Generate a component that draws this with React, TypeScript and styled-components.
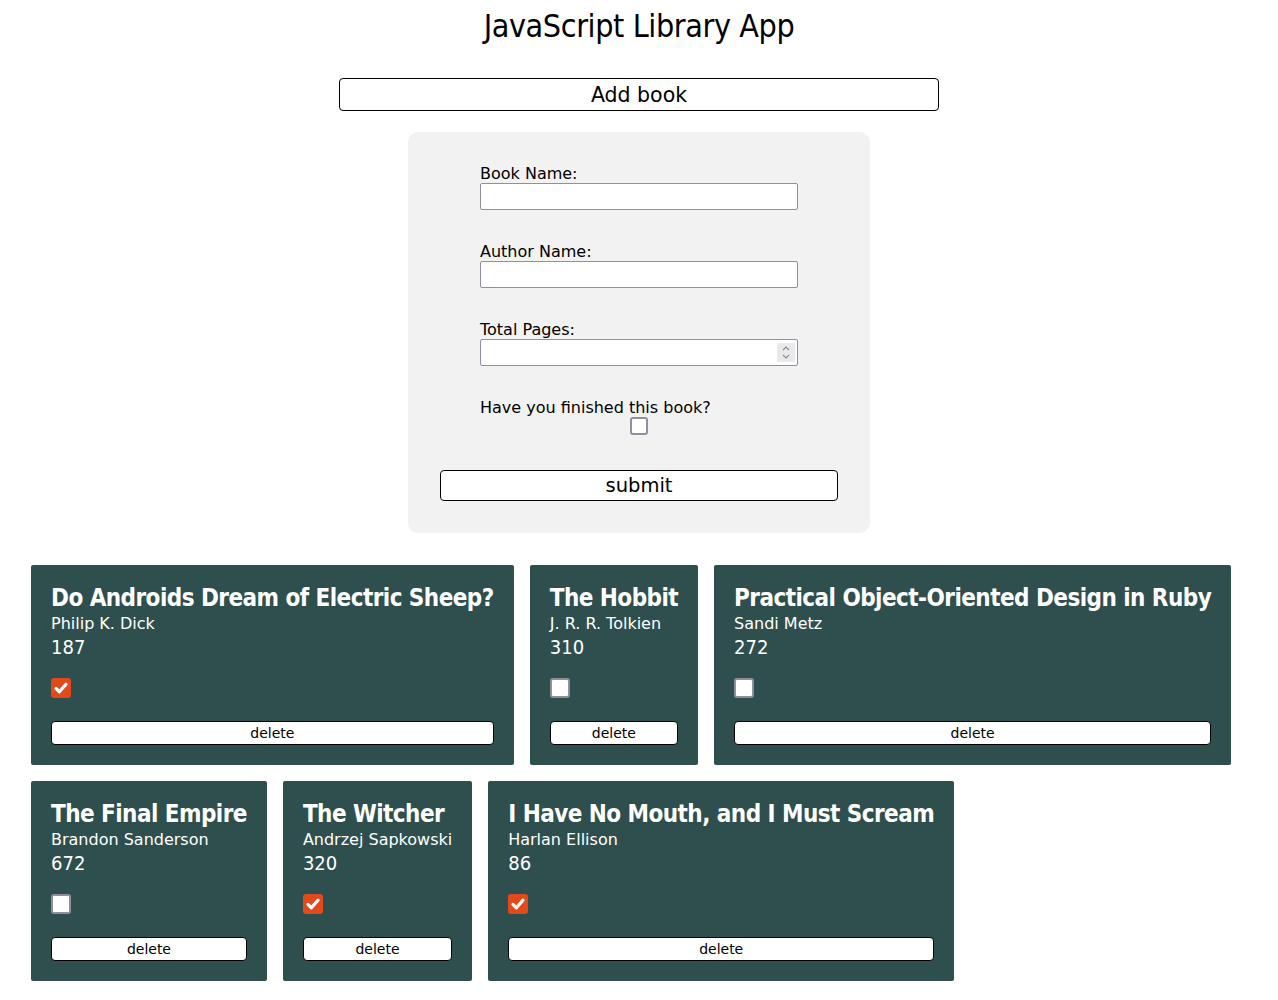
import React, { useState } from "react";
import styled, { createGlobalStyle } from "styled-components";

const GlobalStyle = createGlobalStyle`
  body {
    margin: 8px;
    font-family: "DejaVu Sans", sans-serif;
    background: #ffffff;
    color: #000000;
  }
`;

const Page = styled.div`
  display: flex;
  flex-direction: column;
  align-items: center;
`;

const Title = styled.h1`
  margin: 0;
  font-family: "DejaVu Sans Condensed", "DejaVu Sans", sans-serif;
  font-weight: normal;
  font-size: 32px;
  line-height: 37px;
  letter-spacing: -0.4px;
`;

const AddButton = styled.button`
  margin-top: 33px;
  width: 600px;
  height: 33px;
  background: #ffffff;
  border: 1px solid #000000;
  border-radius: 4px;
  font-family: "DejaVu Sans", sans-serif;
  font-size: 20.5px;
  color: #000000;
  padding: 0;
`;

const Form = styled.form`
  margin-top: 21px;
  width: 462px;
  box-sizing: border-box;
  background: #f2f2f2;
  border-radius: 10px;
  padding: 32px 0;
  display: flex;
  flex-direction: column;
  align-items: center;
  gap: 32px;
`;

const Field = styled.div<{ $center?: boolean }>`
  width: 318px;
  display: flex;
  flex-direction: column;
  align-items: ${(p) => (p.$center ? "center" : "stretch")};
`;

const Label = styled.label`
  font-size: 16px;
  line-height: 19px;
  align-self: flex-start;
`;

const InputWrap = styled.div`
  position: relative;
  display: flex;
`;

const TextInput = styled.input`
  width: 318px;
  height: 27px;
  box-sizing: border-box;
  border: 1px solid #8f8f9d;
  border-radius: 2px;
  background: #ffffff;
  padding: 2px 4px;
  font-family: "DejaVu Sans", sans-serif;
  font-size: 14px;
  -moz-appearance: textfield;
  &::-webkit-outer-spin-button,
  &::-webkit-inner-spin-button {
    -webkit-appearance: none;
    margin: 0;
  }
`;

const Spinner = styled.span`
  position: absolute;
  right: 3px;
  top: 4px;
  width: 18px;
  height: 19px;
  background: #e9e9ed;
  display: flex;
  align-items: center;
  justify-content: center;
`;

const CheckBox = styled.span<{ $checked: boolean; $size: number }>`
  display: inline-flex;
  align-items: center;
  justify-content: center;
  width: ${(p) => p.$size}px;
  height: ${(p) => p.$size}px;
  box-sizing: border-box;
  border-radius: 3px;
  border: ${(p) => (p.$checked ? "none" : "2px solid #8f8f9d")};
  background: ${(p) => (p.$checked ? "#e2491b" : "#ffffff")};
  cursor: pointer;
`;

const HiddenInput = styled.input`
  position: absolute;
  opacity: 0;
  width: 0;
  height: 0;
  margin: 0;
`;

const CheckLabel = styled.label<{ $mt: number }>`
  position: relative;
  display: inline-flex;
  margin-top: ${(p) => p.$mt}px;
`;

const SubmitButton = styled.button`
  margin-top: 3px;
  width: 398px;
  height: 31px;
  background: #ffffff;
  border: 1px solid #000000;
  border-radius: 4px;
  font-family: "DejaVu Sans", sans-serif;
  font-size: 19.5px;
  color: #000000;
  padding: 0;
`;

const Cards = styled.div`
  margin-top: 32px;
  align-self: stretch;
  padding: 0 23px;
  display: flex;
  flex-wrap: wrap;
  gap: 16px;
`;

const Card = styled.div`
  flex: 0 0 auto;
  background: #2f4f4f;
  color: #ffffff;
  border-radius: 2px;
  padding: 20px;
  height: 200px;
  box-sizing: border-box;
  display: flex;
  flex-direction: column;
  align-items: flex-start;
`;

const CardTitle = styled.h2`
  margin: 0;
  font-family: "DejaVu Sans Condensed", "DejaVu Sans", sans-serif;
  font-size: 24px;
  line-height: 26px;
  font-weight: bold;
  letter-spacing: -0.55px;
  white-space: nowrap;
`;

const Author = styled.p`
  margin: 3px 0 0 0;
  font-size: 16px;
  line-height: 19px;
`;

const Pages = styled.p`
  margin: 2px 0 0 0;
  font-family: "DejaVu Sans Condensed", "DejaVu Sans", sans-serif;
  font-size: 20px;
  line-height: 24px;
`;

const DeleteButton = styled.button`
  margin-top: 23px;
  width: 100%;
  height: 24px;
  background: #ffffff;
  border: 1px solid #000000;
  border-radius: 4px;
  font-family: "DejaVu Sans", sans-serif;
  font-size: 14px;
  color: #000000;
  padding: 0;
`;

const Check = ({ checked, size }: { checked: boolean; size: number }) => (
  <CheckBox $checked={checked} $size={size}>
    {checked && (
      <svg width={size * 0.8} height={size * 0.8} viewBox="0 0 14 14">
        <path d="M2.6 7.4 L5.6 10.3 L11.4 3.6" fill="none" stroke="#ffffff" strokeWidth="2.8" strokeLinecap="round" strokeLinejoin="round" />
      </svg>
    )}
  </CheckBox>
);

type Book = { title: string; author: string; pages: number; read: boolean };

const initialBooks: Book[] = [
  { title: "Do Androids Dream of Electric Sheep?", author: "Philip K. Dick", pages: 187, read: true },
  { title: "The Hobbit", author: "J. R. R. Tolkien", pages: 310, read: false },
  { title: "Practical Object-Oriented Design in Ruby", author: "Sandi Metz", pages: 272, read: false },
  { title: "The Final Empire", author: "Brandon Sanderson", pages: 672, read: false },
  { title: "The Witcher", author: "Andrzej Sapkowski", pages: 320, read: true },
  { title: "I Have No Mouth, and I Must Scream", author: "Harlan Ellison", pages: 86, read: true },
];

export default function App() {
  const [books, setBooks] = useState<Book[]>(initialBooks);
  const [finished, setFinished] = useState(false);

  const toggle = (i: number) =>
    setBooks((bs) => bs.map((b, j) => (j === i ? { ...b, read: !b.read } : b)));
  const remove = (i: number) => setBooks((bs) => bs.filter((_, j) => j !== i));

  return (
    <Page>
      <GlobalStyle />
      <Title>JavaScript Library App</Title>
      <AddButton type="button">Add book</AddButton>
      <Form onSubmit={(e) => e.preventDefault()}>
        <Field>
          <Label htmlFor="bookName">Book Name:</Label>
          <TextInput id="bookName" type="text" />
        </Field>
        <Field>
          <Label htmlFor="authorName">Author Name:</Label>
          <TextInput id="authorName" type="text" />
        </Field>
        <Field>
          <Label htmlFor="totalPages">Total Pages:</Label>
          <InputWrap>
            <TextInput id="totalPages" type="number" />
            <Spinner>
              <svg width="10" height="15" viewBox="0 0 10 15">
                <path d="M2 5 L5 2 L8 5" fill="none" stroke="#8a8a8a" strokeWidth="1.1" />
                <path d="M2 10 L5 13 L8 10" fill="none" stroke="#8a8a8a" strokeWidth="1.1" />
              </svg>
            </Spinner>
          </InputWrap>
        </Field>
        <Field $center>
          <Label>Have you finished this book?</Label>
          <CheckLabel $mt={0}>
            <HiddenInput type="checkbox" checked={finished} onChange={() => setFinished(!finished)} />
            <Check checked={finished} size={18} />
          </CheckLabel>
        </Field>
        <SubmitButton type="submit">submit</SubmitButton>
      </Form>
      <Cards>
        {books.map((b, i) => (
          <Card key={b.title}>
            <CardTitle>{b.title}</CardTitle>
            <Author>{b.author}</Author>
            <Pages>{b.pages}</Pages>
            <CheckLabel $mt={19}>
              <HiddenInput type="checkbox" checked={b.read} onChange={() => toggle(i)} />
              <Check checked={b.read} size={20} />
            </CheckLabel>
            <DeleteButton type="button" onClick={() => remove(i)}>delete</DeleteButton>
          </Card>
        ))}
      </Cards>
    </Page>
  );
}
